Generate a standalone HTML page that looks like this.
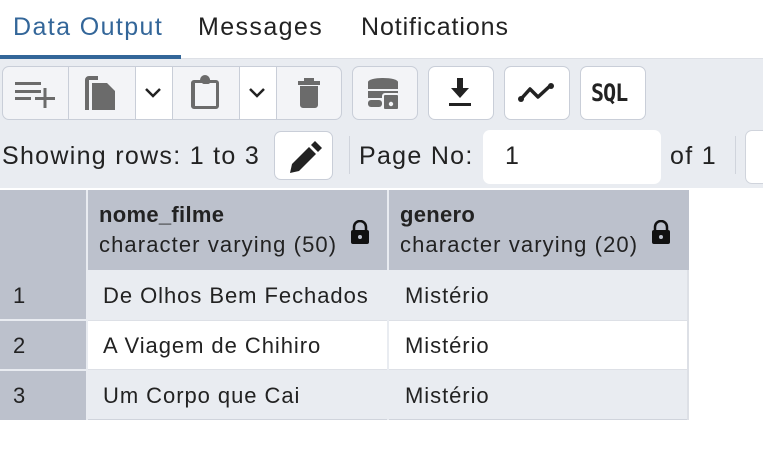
<!DOCTYPE html>
<html><head><style>
*{box-sizing:border-box;margin:0;padding:0}
body{width:763px;height:464px;overflow:hidden;background:#fff;font-family:"Liberation Sans",sans-serif;color:#222;position:relative}
.a{position:absolute}
.tab{position:absolute;top:13px;font-size:25px;letter-spacing:1.4px;color:#222}
.btn{position:absolute;top:66px;height:54px;border:1px solid #c9ced8;border-radius:7px;background:#f3f4f7}
.w{background:#fff}
.sep{position:absolute;top:0;bottom:0;width:1px;background:#c9ced8}
.t{position:absolute;font-size:22px;letter-spacing:0.95px;white-space:nowrap}
.big{position:absolute;font-size:25px;letter-spacing:1.3px;white-space:nowrap}
</style></head><body>
<div class="a" style="left:0;top:58px;width:763px;height:130px;background:#e9ecf1"></div>
<div class="tab" style="left:13px;color:#336699">Data Output</div>
<div class="tab" style="left:198px">Messages</div>
<div class="tab" style="left:361px;letter-spacing:0.9px">Notifications</div>
<div class="a" style="left:0;top:55px;width:181px;height:4px;background:#336699"></div>
<div class="a" style="left:181px;top:58px;width:582px;height:1px;background:#dde0e6"></div>

<div class="btn" style="left:2px;width:340px">
 <div class="sep" style="left:65px"></div>
 <div class="a w" style="left:132px;top:0;width:38px;height:52px;border-left:1px solid #c9ced8;border-right:1px solid #c9ced8"></div>
 <div class="a w" style="left:236px;top:0;width:38px;height:52px;border-left:1px solid #c9ced8;border-right:1px solid #c9ced8"></div>
 <svg class="a" style="left:-3px;top:-1px" width="345" height="54">
  <g fill="#6b6b6b">
   <rect x="15" y="16" width="26" height="3"/><rect x="15" y="24" width="26" height="3"/><rect x="15" y="31" width="16" height="3"/>
   <rect x="35" y="31" width="20" height="3"/><rect x="43.5" y="22" width="3" height="20"/>
   <path d="M85 14a4 4 0 0 1 4-4h9v4h-9v30h-4z"/>
   <path d="M92 17h15l8 8v19h-23z"/>
   <path d="M194 14h6a5 5 0 0 1 10 0h6a3 3 0 0 1 3 3v23a3 3 0 0 1-3 3h-22a3 3 0 0 1-3-3v-23a3 3 0 0 1 3-3z M195 17v23h21v-23z" fill-rule="evenodd"/>
   <rect x="202" y="12" width="8" height="6" rx="2"/>
   <path d="M298 15h22v4h-22z M304 12h10v3h-10z M300 20h18v19a3 3 0 0 1-3 3h-12a3 3 0 0 1-3-3z"/>
  </g>
  <path d="M146 23l7 7 7-7 M250 23l7 7 7-7" fill="none" stroke="#222" stroke-width="2.5"/>
 </svg>
</div>
<div class="btn" style="left:352px;width:66px">
 <svg class="a" style="left:-1px;top:-1px" width="66" height="54"><g fill="#6b6b6b"><ellipse cx="31" cy="16" rx="15" ry="4"/><rect x="16" y="16" width="30" height="7"/><rect x="16" y="25" width="30" height="7"/><rect x="16" y="34" width="14" height="7" rx="3"/><rect x="31" y="28" width="16" height="16" rx="2" stroke="#f3f4f7" stroke-width="2"/></g><circle cx="39" cy="38" r="2.2" fill="#f3f4f7"/></svg>
</div>
<div class="btn w" style="left:428px;width:66px">
 <svg class="a" style="left:-1px;top:-1px" width="66" height="54"><path d="M29 12h6v10h6l-9 10-9-10h6z" fill="#222"/><rect x="21" y="37" width="22" height="3" fill="#222"/></svg>
</div>
<div class="btn w" style="left:504px;width:66px">
 <svg class="a" style="left:-1px;top:-1px" width="66" height="54"><path d="M17 33l9-10 8 8 13-12" fill="none" stroke="#222" stroke-width="3.5" stroke-linejoin="round"/><circle cx="17" cy="33" r="3" fill="#222"/><circle cx="47" cy="20" r="3" fill="#222"/></svg>
</div>
<div class="btn w" style="left:580px;width:66px">
 <div class="a" style="left:10px;top:12px;font-family:'DejaVu Sans Mono',monospace;font-size:24px;font-weight:bold;color:#222;letter-spacing:-1px;transform:scaleX(.9);transform-origin:left">SQL</div>
</div>

<div class="big" style="left:2px;top:142px">Showing rows: 1 to 3</div>
<div class="a" style="left:274px;top:131px;width:59px;height:49px;background:#fff;border:1px solid #c9ced8;border-radius:7px">
 <svg width="57" height="47"><path d="M15 41l2-9 17-17 7 7-17 17z" fill="#222"/><path d="M36 13l4-4 7 7-4 4z" fill="#222"/></svg>
</div>
<div class="a" style="left:349px;top:136px;width:1px;height:38px;background:#d0d4dc"></div>
<div class="big" style="left:359px;top:142px">Page No:</div>
<div class="a" style="left:483px;top:130px;width:178px;height:54px;background:#fff;border-radius:7px;font-size:25px;padding:12px 22px">1</div>
<div class="big" style="left:670px;top:142px">of 1</div>
<div class="a" style="left:735px;top:136px;width:1px;height:38px;background:#d0d4dc"></div>
<div class="a" style="left:745px;top:130px;width:30px;height:54px;background:#fff;border-radius:7px;border:1px solid #d0d4dc"></div>

<div class="a" style="left:0;top:190px;width:689px;height:230px">
 <div class="a" style="left:0;top:0;width:689px;height:80px;background:#bcc1cc"></div>
 <div class="a" style="left:0;top:80px;width:86px;height:150px;background:#bcc1cc"></div>
 <div class="a" style="left:88px;top:80px;width:601px;height:50px;background:#e9ecf1"></div>
 <div class="a" style="left:88px;top:130px;width:601px;height:50px;background:#fff;border-top:1px solid #dde0e6;border-bottom:1px solid #dde0e6"></div>
 <div class="a" style="left:88px;top:180px;width:601px;height:50px;background:#e9ecf1;border-bottom:1px solid #d0d4dc"></div>
 <div class="a" style="left:86px;top:0;width:2px;height:230px;background:#e9ecf1"></div>
 <div class="a" style="left:387px;top:0;width:2px;height:230px;background:#e9ecf1"></div>
 <div class="a" style="left:687px;top:80px;width:2px;height:150px;background:#dde0e6"></div>
 <div class="a" style="left:0;top:129px;width:86px;height:2px;background:#e9ecf1"></div>
 <div class="a" style="left:0;top:179px;width:86px;height:2px;background:#e9ecf1"></div>
 <div class="t" style="left:99px;top:12px;font-weight:bold;letter-spacing:0.3px">nome_filme</div>
 <div class="t" style="left:99px;top:42px;letter-spacing:1.1px">character varying (50)</div>
 <div class="t" style="left:400px;top:12px;font-weight:bold;letter-spacing:0.3px">genero</div>
 <div class="t" style="left:400px;top:42px;letter-spacing:1.1px">character varying (20)</div>
 <svg class="a" style="left:349px;top:30px" width="22" height="26"><path d="M5 10V7a6 6 0 0 1 12 0v3" fill="none" stroke="#111" stroke-width="2.5"/><rect x="2" y="10" width="18" height="14" rx="2" fill="#111"/><circle cx="11" cy="17" r="2" fill="#bcc1cc"/></svg>
 <svg class="a" style="left:650px;top:30px" width="22" height="26"><path d="M5 10V7a6 6 0 0 1 12 0v3" fill="none" stroke="#111" stroke-width="2.5"/><rect x="2" y="10" width="18" height="14" rx="2" fill="#111"/><circle cx="11" cy="17" r="2" fill="#bcc1cc"/></svg>
 <div class="t" style="left:13px;top:93px">1</div>
 <div class="t" style="left:13px;top:143px">2</div>
 <div class="t" style="left:13px;top:193px">3</div>
 <div class="t" style="left:103px;top:93px">De Olhos Bem Fechados</div>
 <div class="t" style="left:103px;top:143px">A Viagem de Chihiro</div>
 <div class="t" style="left:103px;top:193px">Um Corpo que Cai</div>
 <div class="t" style="left:405px;top:93px">Mistério</div>
 <div class="t" style="left:405px;top:143px">Mistério</div>
 <div class="t" style="left:405px;top:193px">Mistério</div>
</div>
</body></html>
